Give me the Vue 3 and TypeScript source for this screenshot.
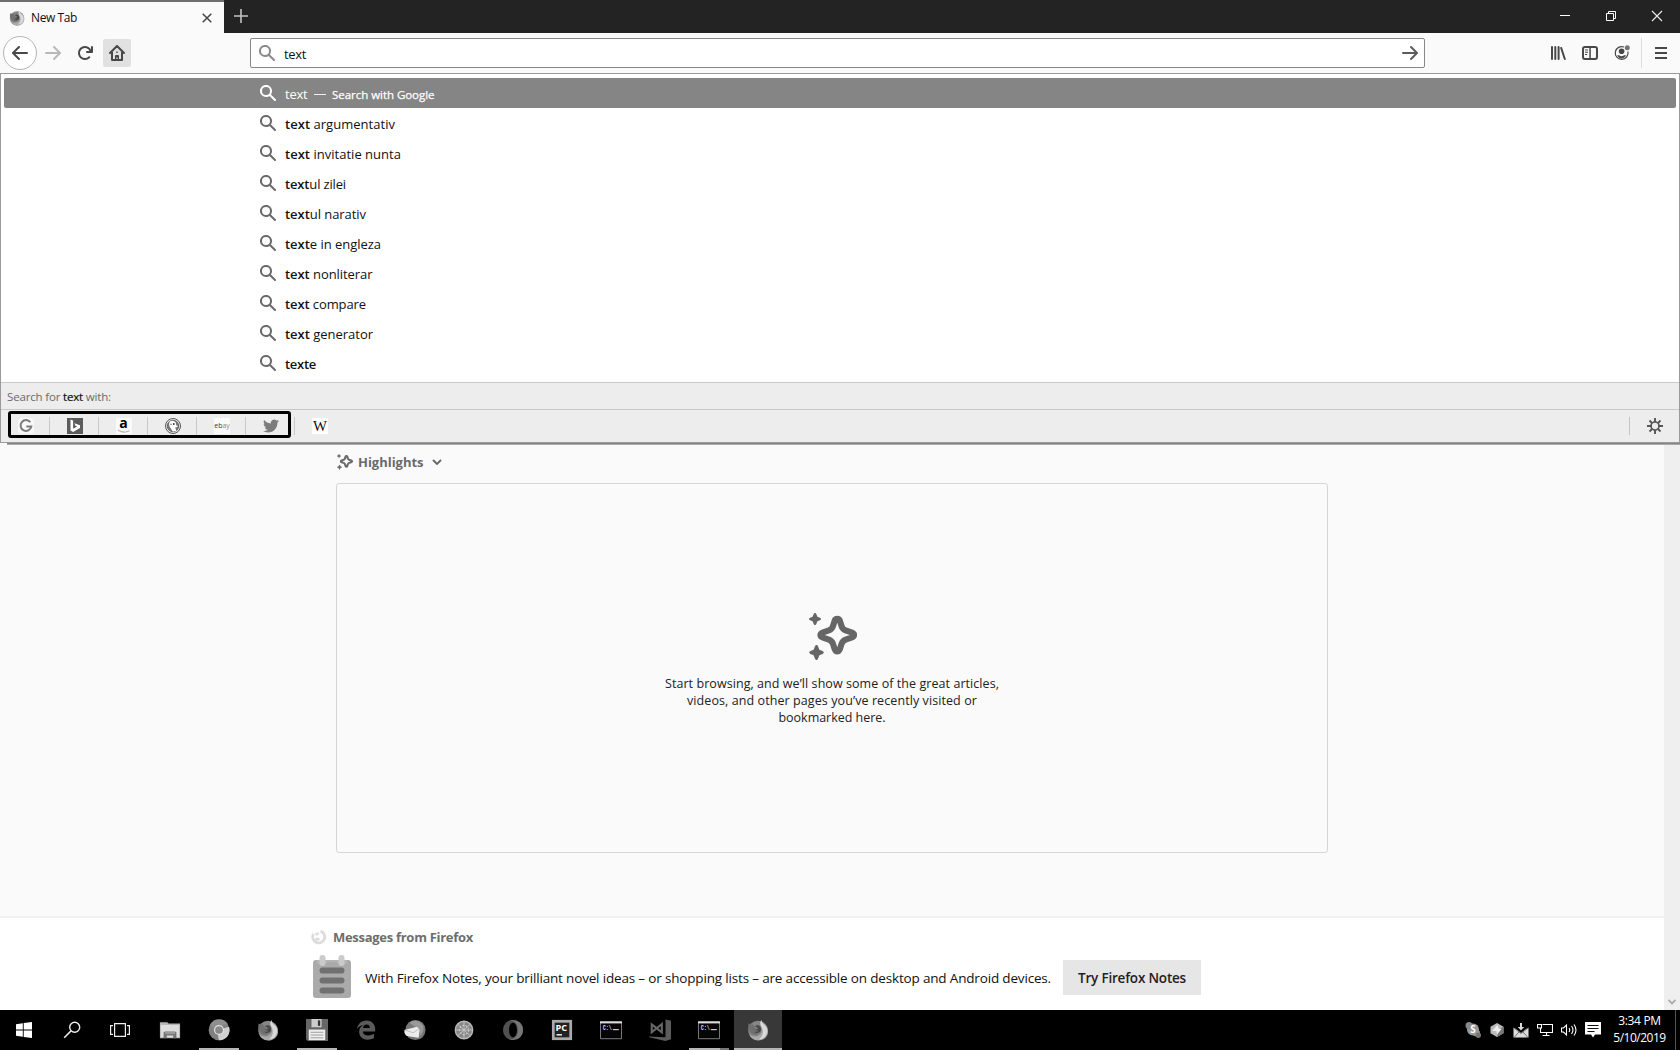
<script setup lang="ts">
import type { Directive } from 'vue'

// Tracks a line of text so that it fills the given width in pixels.
const vFit: Directive<HTMLElement, number> = {
  mounted(el, { value }) {
    const count = (el.textContent ?? '').length
    const natural = el.getBoundingClientRect().width
    el.style.letterSpacing = `${(value - natural) / count}px`
  },
}

interface Suggestion { bold: string; rest: string; width: number }
const suggestions: Suggestion[] = [
  { bold: 'text', rest: ' argumentativ', width: 110 },
  { bold: 'text', rest: ' invitatie nunta', width: 116 },
  { bold: 'text', rest: 'ul zilei', width: 61 },
  { bold: 'text', rest: 'ul narativ', width: 81 },
  { bold: 'text', rest: 'e in engleza', width: 96 },
  { bold: 'text', rest: ' nonliterar', width: 87.5 },
  { bold: 'text', rest: ' compare', width: 81 },
  { bold: 'text', rest: ' generator', width: 88 },
  { bold: 'texte', rest: '', width: 31 },
]

const engines = ['google', 'bing', 'amazon', 'duck', 'ebay', 'twitter', 'wiki']

interface Task { icon: string; state?: 'open' | 'grouped' | 'active' }
const system = ['windows', 'find', 'taskview']
const tasks: Task[] = [
  { icon: 'explorer' },
  { icon: 'chrome', state: 'open' },
  { icon: 'firefox' },
  { icon: 'floppy', state: 'open' },
  { icon: 'edge' },
  { icon: 'thunderbird' },
  { icon: 'sphere' },
  { icon: 'opera' },
  { icon: 'pycharm' },
  { icon: 'terminal' },
  { icon: 'vscode' },
  { icon: 'terminal', state: 'grouped' },
  { icon: 'firefox', state: 'active' },
]
const tray = ['skype', 'hex', 'mail', 'network', 'volume', 'notice']
const noteLines = ["Start browsing, and we’ll show some of the great articles,", "videos, and other pages you’ve recently visited or", "bookmarked here."]
const noteWidths = [334, 290, 107]
</script>

<template>
  <div class="screen">
    <svg class="defs" aria-hidden="true">
      <symbol id="back" viewBox="0 0 16 16"><path d="M15 7H3.414l4.293-4.293a1 1 0 0 0-1.414-1.414l-6 6a1 1 0 0 0 0 1.414l6 6a1 1 0 0 0 1.414-1.414L3.414 9H15a1 1 0 0 0 0-2z" /></symbol>
      <symbol id="forward" viewBox="0 0 16 16"><path transform="matrix(-1 0 0 1 16 0)" d="M15 7H3.414l4.293-4.293a1 1 0 0 0-1.414-1.414l-6 6a1 1 0 0 0 0 1.414l6 6a1 1 0 0 0 1.414-1.414L3.414 9H15a1 1 0 0 0 0-2z" /></symbol>
      <symbol id="reload" viewBox="0 0 16 16"><path d="M15 1a1 1 0 0 0-1 1v2.418A6.995 6.995 0 1 0 8 15a6.954 6.954 0 0 0 4.95-2.05 1 1 0 0 0-1.414-1.414A5.019 5.019 0 1 1 12.549 6H10a1 1 0 0 0 0 2h5a1 1 0 0 0 1-1V2a1 1 0 0 0-1-1z" /></symbol>
      <symbol id="home" viewBox="0 0 16 16"><path fill="none" stroke="currentColor" stroke-width="2" stroke-linecap="round" stroke-linejoin="round" d="M1 8l7-7 7 7M3 7v8h10V7" /><path d="M6 15v-4a1 1 0 0 1 1-1h2a1 1 0 0 1 1 1v4H8.600v-2.500H7.400V15zM7.300 6.500h1.400v1.400H7.300z" /></symbol>
      <symbol id="search" viewBox="0 0 16 16"><path d="M15.707 14.293l-4.822-4.822a6.019 6.019 0 1 0-1.414 1.414l4.822 4.822a1 1 0 0 0 1.414-1.414zM6 10a4 4 0 1 1 4-4 4 4 0 0 1-4 4z" /></symbol>
      <symbol id="library" viewBox="0 0 16 16"><path fill="none" stroke="currentColor" stroke-width="2" stroke-linecap="round" d="M2 2v12M5.300 2v12M8.600 2v12M11.200 3l3.600 11" /></symbol>
      <symbol id="sidebar" viewBox="0 0 16 16"><rect x="1" y="2" width="14" height="12" rx="2" fill="none" stroke="currentColor" stroke-width="2" /><path d="M7.300 2h1.500v12H7.300zM3 4.500h3v1H3zM3 6.700h3v1H3zM3 8.900h2.200v1H3z" /></symbol>
      <symbol id="account" viewBox="0 0 16 16"><path fill="none" stroke="currentColor" stroke-width="1.200" d="M10 2A6.400 6.400 0 1 0 13.900 6.500" /><circle cx="7.600" cy="6.200" r="2.800" /><path d="M3.200 10.200h1.900c1.500 1.300 3.500 1.300 5 0H12c-.6 2-2.400 3.200-4.400 3.200s-3.800-1.200-4.400-3.200z" /><circle cx="13.300" cy="2.700" r="2.500" opacity=".75" /></symbol>
      <symbol id="menu" viewBox="0 0 16 16"><path d="M2 2h12v1.900H2zM2 7h12v1.900H2zM2 12h12v1.900H2z" /></symbol>
      <symbol id="spark" viewBox="0 0 48 48"><path fill="none" stroke="currentColor" stroke-width="6" stroke-linejoin="round" d="M28 4.500c1.500 0 2.200.8 2.600 2l1.600 5.200c.7 2.300 1.800 3.400 4 4.200l5.700 1.900c1.800.6 2.600 1.500 2.600 2.600s-.8 2-2.600 2.600l-5.700 1.900c-2.200.8-3.300 1.900-4 4.200l-1.700 5.200c-.5 1.300-1.200 2.200-2.500 2.200s-2-.9-2.500-2.200l-1.700-5.200c-.7-2.300-1.800-3.400-4-4.200l-5.700-1.900c-1.800-.6-2.600-1.500-2.600-2.600s.8-2 2.600-2.600l5.700-1.900c2.200-.8 3.300-1.900 4-4.200l1.600-5.200c.4-1.200 1.100-2 2.600-2z" transform="translate(-.3 1.200) scale(1.020)" /><path d="M6 0c.8 0 1.200.6 1.500 1.500l.9 2.200 2.500 1c1.500.5 1.500 2.100 0 2.600l-2.500 1-.9 2.200C7.200 11.400 6.800 12 6 12s-1.200-.6-1.500-1.500l-.9-2.200-2.500-1c-1.500-.5-1.500-2.100 0-2.600l2.500-1 .9-2.200C4.800.6 5.200 0 6 0zM7.500 32c.8 0 1.300.6 1.600 1.500l1.300 3.300 3.200 1.200c1.600.6 1.600 2.400 0 3l-3.200 1.200-1.300 3.300c-.3.900-.8 1.500-1.600 1.500s-1.300-.6-1.600-1.500l-1.300-3.300L1.400 41c-1.600-.6-1.600-2.400 0-3l3.200-1.200 1.300-3.300c.3-.9.8-1.500 1.600-1.500z" /></symbol>
      <symbol id="gear" viewBox="0 0 16 16"><circle cx="8" cy="8" r="4" fill="none" stroke="currentColor" stroke-width="1.700" /><path fill="none" stroke="currentColor" stroke-width="1.900" d="M8 0v4M8 12v4M0 8h4M12 8h4M2.500 2.500l2.600 2.600M10.900 10.900l2.600 2.600M13.500 2.500l-2.600 2.600M5.100 10.900l-2.600 2.600" /></symbol>
      <symbol id="firefox" viewBox="0 0 24 24">
        <circle cx="12" cy="12.500" r="10.700" fill="#858585" />
        <path d="M2 5c1.500 1 3 1 4 .8L9 9l3 8c-5 1-8-1-9.500-4.500C1 9.500 1.200 7 2 5z" fill="#707070" />
        <path d="M14 3l6 3c4 4.500 4 11.500-.5 15C13 26 5 23 2.500 17c4 3 12 3 13.500-3 .6-4-1-7-2-11z" fill="#a9a9a9" />
        <path d="M15.500 1c1 2 1.500 4 4 6 4 4 3 9-.5 13-2 1.600-4 2-6 2 5-3 5.500-9 2.500-14-1.600-2.500-1-4.500 0-7z" fill="#d9d9d9" />
        <path d="M9 8c1-1.300 4-1.700 5.500.5 1.300 2 1.100 4.500-.5 6-2.300 1.500-5 1-6-.7 2 .3 3.500 0 4.300-1-1.500-.3-2.300-.3-3.300-1.300 1.200-.4 2.700-.4 3.300-1.600-1.200-.6-2.300-.6-3.300-1.900z" fill="#484848" />
      </symbol>
      <symbol id="google" viewBox="0 0 16 16"><rect width="16" height="16" rx="4" fill="#f8f8f8" /><path d="M12.300 4.200A5.400 5.400 0 1 0 13.300 8.600H8.300" fill="none" stroke="#7b7b7b" stroke-width="2" /></symbol>
      <symbol id="bing" viewBox="0 0 16 16"><rect width="16" height="16" fill="#5c5c5c" /><path d="M3.500 1.500l2.600.9v8.400l4-2.200-1.700-.8-1-2.500 5.600 2v2.700L6.100 14l-2.600-1.500z" fill="#fff" /></symbol>
      <symbol id="amazon" viewBox="0 0 16 16"><rect width="16" height="16" fill="#fafafa" /><text x="7.500" y="10" text-anchor="middle" font-family="Open Sans, sans-serif" font-weight="700" font-size="14" fill="#000">a</text><path d="M2 12c4 2.700 8 2.600 11.500.7" fill="none" stroke="#b5b5b5" stroke-width="1.200" /></symbol>
      <symbol id="duck" viewBox="0 0 16 16"><circle cx="8" cy="8" r="7.500" fill="#e8e8e8" stroke="#555" /><circle cx="8" cy="8" r="5.700" fill="#777" stroke="#555" stroke-width=".8" /><path d="M4.800 3.500c2.500-1.500 5.700-.5 6.200 2l.2 2c1 0 2 .3 1.500 1-.8.700-2 .6-2.400 1.200l1 3.300-3.500.5L4.800 9c-1-2-1-4 0-5.500z" fill="#fff" /><circle cx="8.800" cy="6" r=".9" fill="#333" /><circle cx="6" cy="6.300" r=".7" fill="#555" /></symbol>
      <symbol id="ebay" viewBox="0 0 16 16"><rect width="16" height="16" fill="#fafafa" /><text x=".3" y="10" textLength="15.400" lengthAdjust="spacingAndGlyphs" font-family="Open Sans, sans-serif" font-size="7.500" fill="#333">eb<tspan fill="#888">ay</tspan></text></symbol>
      <symbol id="twitter" viewBox="0 0 24 24"><path fill="#7c7c7c" d="M23.953 4.570a10 10 0 01-2.825.775 4.958 4.958 0 002.163-2.723c-.951.555-2.005.959-3.127 1.184a4.920 4.920 0 00-8.384 4.482C7.690 8.095 4.067 6.130 1.640 3.162a4.822 4.822 0 00-.666 2.475c0 1.710.870 3.213 2.188 4.096a4.904 4.904 0 01-2.228-.616v.060a4.923 4.923 0 003.946 4.827 4.996 4.996 0 01-2.212.085 4.936 4.936 0 004.604 3.417 9.867 9.867 0 01-6.102 2.105c-.390 0-.779-.023-1.170-.067a13.995 13.995 0 007.557 2.209c9.053 0 13.998-7.496 13.998-13.985 0-.210 0-.420-.015-.630A9.935 9.935 0 0024 4.590z" /></symbol>
      <symbol id="wiki" viewBox="0 0 16 16"><rect width="16" height="16" fill="#fff" /><text x="1" y="13" textLength="14" lengthAdjust="spacingAndGlyphs" font-family="Liberation Serif, serif" font-size="14" fill="#111">W</text></symbol>
      <symbol id="windows" viewBox="0 0 24 24"><path fill="#fff" d="M4 6.200l6.800-1v6.300H4zM11.700 5.100L20 4v7.500h-8.300zM4 12.500h6.800v6.300L4 17.800zM11.700 12.500H20V20l-8.300-1.100z" /></symbol>
      <symbol id="find" viewBox="0 0 24 24"><circle cx="14.700" cy="9.200" r="5" fill="none" stroke="#eee" stroke-width="1.400" /><path d="M11 12.900L4.200 19.700" stroke="#eee" stroke-width="1.500" /></symbol>
      <symbol id="taskview" viewBox="0 0 24 24"><path fill="none" stroke="#eee" stroke-width="1.200" d="M6.600 5.600h10.800v12.800H6.600zM5 7.600H2.600v8.800H5M19 7.600h2.400v8.800H19" /></symbol>
      <symbol id="explorer" viewBox="0 0 24 24"><path fill="#b5b5b5" d="M1 3.500h8l1.500 1.500H23v16H1z" /><path fill="#ddd" d="M2 6.500h20V20H2z" /><path fill="#777" d="M5 21v-6.500l1.500-1h11l1.500 1V21h-3.500v-3h-7v3z" /><path fill="#aaa" d="M6.500 14.500h11v1.500h-11z" /></symbol>
      <symbol id="chrome" viewBox="0 0 24 24"><circle cx="12" cy="12" r="11.300" fill="#808080" /><path d="M12 12L23 8.500A11.300 11.300 0 0 1 12 23.300l-1-4z" fill="#d0d0d0" /><path d="M12 6.700L22 6A11.300 11.300 0 0 0 2.300 6L7 12z" fill="#8e8e8e" /><circle cx="12" cy="12" r="5.500" fill="#e1e1e1" /><circle cx="12" cy="12" r="4.200" fill="#888" /></symbol>
      <symbol id="floppy" viewBox="0 0 24 24"><path fill="#666" d="M0 0h24v24H2l-2-2z" /><path fill="#ccc" d="M6 0h11v9H6z" /><path fill="#333" d="M13 1.500h2.500v6H13z" /><path fill="#eee" d="M3 11.500h18V23H3z" /><path stroke="#999" d="M5 14.500h14M5 17.500h14M5 20.500h14" /></symbol>
      <symbol id="edge" viewBox="0 0 24 24"><path fill="#5b5b5b" d="M2 10.500C3.500 4.500 7.500 1.500 12.500 1.500c6 0 9.700 4.500 9.500 9.500v2.500H8.500c.2 3 2.600 4.500 5.800 4.500 2.400 0 4.500-.7 6.400-1.800v4.500c-2 1.100-4.500 1.800-7.200 1.800-5.700 0-9-3.700-9-8.500 0-3.500 1.800-6 4.600-7.300C6.500 6.800 4 8 2 10.500zM8.700 9.700h7.600c0-2.500-1.500-3.700-3.700-3.700s-3.600 1.500-3.900 3.700z" /></symbol>
      <symbol id="thunderbird" viewBox="0 0 24 24"><circle cx="12.500" cy="12" r="11" fill="#777" /><path fill="#999" d="M6 4c6-4 12-2 15 4 1 4-1 9-4 11 1-6-1-10-6-11z" /><path fill="#ececec" d="M.5 12L14 8.500l3 3-1 9-13-2C1 17 0 15 .5 12z" /><path fill="none" stroke="#bbb" d="M1 12l9 3 6-4" /></symbol>
      <symbol id="sphere" viewBox="0 0 24 24"><circle cx="12" cy="12" r="9.500" fill="#888" stroke="#bbb" stroke-width="1.500" /><path fill="none" stroke="#c9c9c9" stroke-width=".9" d="M3 12h18M12 3v18M5.500 6l13 12M18.500 6l-13 12" /><circle cx="12" cy="12" r="5" fill="none" stroke="#ccc" stroke-width="1.200" stroke-dasharray="2 1.500" /></symbol>
      <symbol id="opera" viewBox="0 0 24 24"><path fill="#505050" fill-rule="evenodd" d="M12 1a11 11 0 1 0 0 22 11 11 0 0 0 0-22zm0 3c2.500 0 4.300 3.500 4.300 8s-1.800 8-4.300 8-4.300-3.500-4.300-8S9.500 4 12 4z" /><path fill="#777" d="M12 1a11 11 0 0 1 0 22c-1.800 0-3.500-.5-5-1.500 6 2 10.300-2.500 10.300-9.500S13 .5 7 2.500C8.500 1.500 10.200 1 12 1z" /></symbol>
      <symbol id="pycharm" viewBox="0 0 24 24"><path fill="#aaa" d="M1 1h22v22H1z" /><path fill="#222" d="M4 4h16v16H4z" /><text x="5" y="13" font-family="Open Sans, sans-serif" font-weight="700" font-size="10" fill="#fff">PC</text><path fill="#fff" d="M6 16.500h6V18H6z" /></symbol>
      <symbol id="terminal" viewBox="0 0 24 24"><path fill="#050505" stroke="#888" d="M.5 3.500h23v18H.5z" /><path fill="#ddd" d="M0 2.500h24v2.300H0z" /><text x="3" y="12" textLength="10" lengthAdjust="spacingAndGlyphs" font-family="Liberation Mono, monospace" font-weight="700" font-size="7" fill="#ddd">C:\</text><path fill="#ddd" d="M14 11h6.500v1.200H14z" /></symbol>
      <symbol id="vscode" viewBox="0 0 24 24"><path fill="#5c5c5c" d="M18 .5l6 1.500v20l-6 2L0 20v-1l18 1z" /><path fill="none" stroke="#666" stroke-width="2.300" d="M14 5.500L3 14.500V6L14 14.500z" /></symbol>
      <symbol id="skype" viewBox="0 0 16 16"><circle cx="8" cy="7.500" r="6" fill="#999" /><circle cx="4" cy="3.500" r="3.500" fill="#888" /><circle cx="11.500" cy="11" r="3.500" fill="#999" /><text x="8" y="11.200" text-anchor="middle" font-family="Open Sans, sans-serif" font-weight="700" font-size="10" fill="#fff">S</text><circle cx="13.300" cy="13.300" r="2.700" fill="#777" /></symbol>
      <symbol id="hex" viewBox="0 0 16 16"><path fill="#bbb" d="M8 1l6.500 3.700v6.600L8 15l-6.500-3.700V4.700z" /><path fill="#777" d="M9 8l5.500-3.300v6.600L8 15z" /><path fill="#eee" d="M3 9l5.500-6 1 3.500 3 .5L8 12.500 7.500 9z" /></symbol>
      <symbol id="mail" viewBox="0 0 16 16"><path fill="#ddd" d="M.5 5.500L4.500 8 8 11l3.500-3 4-2.500v10H.5z" /><path fill="none" stroke="#555" stroke-width=".8" d="M1 15.500l5-5.500M15 15.500L10 10M1 6l7 5.500L15 6" /><path fill="#ddd" d="M7 1h2v4h2.200L8 8.500 4.800 5H7z" /></symbol>
      <symbol id="network" viewBox="0 0 16 16"><path fill="none" stroke="#fff" stroke-width="1.100" d="M5.500 2.500h10v8H3.500V6.500M.5 2.500h4v3.500h-4zM9.500 10.500v3M5.500 13.500h7" /></symbol>
      <symbol id="volume" viewBox="0 0 16 16"><path fill="none" stroke="#fff" stroke-width="1.100" d="M.5 6h2l3-3v10l-3-3h-2zM8 6q1.500 2 0 4M10.500 4q3 4 0 8M13 2.500q4 5.500 0 11" /></symbol>
      <symbol id="notice" viewBox="0 0 16 16"><path fill="#fff" d="M0 0h16v12.500H10L8 15.500 6 12.500H0z" /><path stroke="#111" d="M2.500 3.500h11M2.500 6.500h11M2.500 9.500h7" /></symbol>
    </svg>

    <header class="tabs">
      <div class="tab">
        <svg class="i16"><use href="#firefox" /></svg>
        <span class="tab-name"><span v-fit="46">New Tab</span></span>
        <svg class="close" viewBox="0 0 10 10"><path d="M.7.7l8.600 8.600M9.300.7L.7 9.300" stroke="#444" stroke-width="1.500" /></svg>
      </div>
      <svg class="plus" viewBox="0 0 14 14"><path d="M7 0v14M0 7h14" stroke="#c4c4c4" stroke-width="1.600" /></svg>
      <div class="controls">
        <svg viewBox="0 0 12 12"><path d="M1 5.500h10" stroke="#fff" /></svg>
        <svg viewBox="0 0 12 12"><path d="M1.500 3.500h7v7h-7zM3.500 3.500v-2h7v7h-2" fill="none" stroke="#fff" /></svg>
        <svg viewBox="0 0 12 12"><path d="M1 1l10 10M11 1L1 11" stroke="#eee" stroke-width="1.100" /></svg>
      </div>
    </header>

    <nav class="toolbar">
      <button class="back"><svg class="i16"><use href="#back" /></svg></button>
      <button class="forward"><svg class="i16"><use href="#forward" /></svg></button>
      <button class="reload"><svg class="i16"><use href="#reload" /></svg></button>
      <button class="home"><svg class="i16"><use href="#home" /></svg></button>
      <div class="url">
        <svg class="i16 url-icon"><use href="#search" /></svg>
        <span class="url-text"><span v-fit="22">text</span></span>
        <svg class="i16 go"><use href="#forward" /></svg>
      </div>
      <div class="tools">
        <svg class="i16"><use href="#library" /></svg>
        <svg class="i16"><use href="#sidebar" /></svg>
        <svg class="i16"><use href="#account" /></svg>
      </div>
      <div class="menu"><svg class="i16"><use href="#menu" /></svg></div>
    </nav>

    <section class="panel">
      <div class="results">
        <div class="row selected">
          <svg class="i16"><use href="#search" /></svg>
          <span class="main"><span v-fit="22.500">text</span></span>
          <span class="dash"></span>
          <span class="action"><span v-fit="102.500">Search with Google</span></span>
        </div>
        <div v-for="s in suggestions" :key="s.bold + s.rest" class="row">
          <svg class="i16"><use href="#search" /></svg>
          <span class="main"><span v-fit="s.width"><b>{{ s.bold }}</b>{{ s.rest }}</span></span>
        </div>
      </div>
      <div class="with"><span v-fit="104">Search for <b>text</b> with:</span></div>
      <div class="engines">
        <div v-for="e in engines" :key="e" class="engine"><svg class="i16"><use :href="'#' + e" /></svg></div>
        <div class="settings"><svg class="i16"><use href="#gear" /></svg></div>
        <div class="frame"></div>
      </div>
    </section>
    <div class="shade"></div>

    <main class="content">
      <div class="page">
        <div class="highlights">
          <h3>
            <svg class="i16"><use href="#spark" /></svg>
            <span class="h-text"><span v-fit="65.500">Highlights</span></span>
            <svg class="chev" viewBox="0 0 10 6"><path d="M1 1l4 4 4-4" fill="none" stroke="#666" stroke-width="1.800" /></svg>
          </h3>
          <div class="empty">
            <svg class="big"><use href="#spark" /></svg>
            <p v-for="(line, i) in noteLines" :key="line"><span v-fit="noteWidths[i]">{{ line }}</span></p>
          </div>
        </div>
        <footer class="messages">
          <div class="from">
            <svg class="i16" viewBox="0 0 16 16"><path d="M9.500 2.200A6 6 0 1 1 2.500 5M4.500 5.500q2-1 3 0M4.500 9.500q2 1.500 4 0" fill="none" stroke="#dcdcdc" stroke-width="2.800" /></svg>
            <span v-fit="140">Messages from Firefox</span>
          </div>
          <div class="snippet">
            <svg class="notes" viewBox="0 0 38 43"><rect y="5" width="38" height="38" rx="3" fill="#aaa" /><path d="M4 5h30v3q-5 3-9 0l-2-1h-8l-2 1q-5 3-9 0z" fill="#b5b5b5" /><path d="M9.500 3v5M28.500 3v5" stroke="#cacaca" stroke-width="6" stroke-linecap="round" /><path d="M9.500 15.500h19M9.500 25.500h19M9.500 35.500h19" stroke="#707070" stroke-width="6" stroke-linecap="round" /></svg>
            <span class="snippet-text"><span v-fit="686">With Firefox Notes, your brilliant novel ideas – or shopping lists – are accessible on desktop and Android devices.</span></span>
            <button class="try"><span v-fit="108">Try Firefox Notes</span></button>
          </div>
        </footer>
      </div>
      <div class="scroll"><svg viewBox="0 0 8 6"><path d="M.5 1L4 4.500 7.500 1" fill="none" stroke="#aaa" stroke-width="1.800" /></svg></div>
    </main>

    <div class="taskbar">
      <div v-for="s in system" :key="s" class="sys"><svg class="i24"><use :href="'#' + s" /></svg></div>
      <div class="tasks">
        <div v-for="(t, i) in tasks" :key="i" class="task" :class="t.state"><svg class="i24"><use :href="'#' + t.icon" /></svg></div>
      </div>
      <div class="tray">
        <svg v-for="t in tray" :key="t" class="i16"><use :href="'#' + t" /></svg>
      </div>
      <div class="clock"><div><span v-fit="42.500">3:34 PM</span></div><div><span v-fit="52.500">5/10/2019</span></div></div>
      <div class="peek"></div>
    </div>
  </div>
</template>

<style>
body { margin: 0; overflow: hidden; }
</style>

<style scoped>
* { box-sizing: border-box; }
.screen { width: 1680px; height: 1050px; display: flex; flex-direction: column; background: #fafafa; color: #111; font-family: "Open Sans", "Noto Sans", sans-serif; font-size: 13px; white-space: nowrap; overflow: hidden; }
svg { display: block; flex: none; fill: currentColor; }
.defs { display: none; }
button { border: 0; padding: 0; background: none; color: inherit; font: inherit; display: flex; align-items: center; justify-content: center; }
.i16 { width: 16px; height: 16px; }
.i24 { width: 24px; height: 24px; }
b { font-weight: 600; }

.tabs { height: 33px; flex: none; background: #232323; display: flex; }
.tab { width: 224px; background: #fafafa; border-top: 2px solid #6d6d6d; display: flex; align-items: center; padding: 0 12px 0 9px; }
.tab-name { flex: 1; margin-left: 6px; font-size: 12px; }
.close { width: 10px; height: 10px; }
.plus { width: 14px; height: 14px; margin: 9px 0 0 10px; }
.controls { margin-left: auto; display: flex; gap: 34px; padding: 10px 17px 0 0; }
.controls svg { width: 12px; height: 12px; }

.toolbar { height: 40px; flex: none; background: #fafafa; display: flex; align-items: center; color: #484848; }
.back { width: 34px; height: 34px; margin-left: 3px; border: 1px solid #b5b5b5; border-radius: 50%; background: #fff; }
.forward { width: 32px; color: #b9b9b9; }
.reload { width: 32px; }
.home { width: 28px; height: 28px; margin-left: 2px; border-radius: 2px; background: #e1e1e1; }
.url { width: 1175px; height: 30px; margin-left: 119px; border: 1px solid #888; border-radius: 2px; background: #fff; display: flex; align-items: center; padding: 0 6px 0 8px; }
.url-icon { color: #8a8a8a; }
.go { color: #5c5c5c; }
.url-text { flex: 1; margin-left: 9px; color: #111; font-size: 13px; padding-top: 1px; }
.tools { margin-left: auto; display: flex; gap: 16px; }
.menu { height: 30px; margin-left: 11px; border-left: 1px solid #ddd; padding: 7px 11px 0 11px; }

.panel { height: 370px; flex: none; border: 1px solid #9a9a9a; background: #fff; display: flex; flex-direction: column; }
.results { height: 308px; padding: 4px 3px 0; }
.row { height: 30px; display: flex; align-items: center; padding-left: 256px; color: #111; font-size: 13px; }
.row > svg { color: #6a6a6a; }
.main { margin-left: 9px; padding-top: 2px; }
.selected, .row.selected > svg { color: #fff; }
.selected { background: #858585; border-radius: 2px; }
.dash { width: 12px; height: 1px; margin: 3px 6px 0 6.500px; background: #eee; }
.action { font-size: 11.500px; padding-top: 3px; font-weight: 500; -webkit-text-stroke: .25px #fff; }
.with { height: 27px; border-top: 1px solid #c9c9c9; background: #ededed; color: #6a6a6a; font-size: 11.500px; line-height: 27px; padding-left: 6px; }
.with b { color: #111; font-weight: 500; -webkit-text-stroke: .2px #111; }
.engines { flex: 1; position: relative; display: flex; align-items: center; border-top: 1px solid #c9c9c9; background: #ededed; padding-bottom: 1px; }
.engine { width: 49px; height: 18px; display: flex; align-items: center; justify-content: center; border-right: 1px solid #c9c9c9; padding-left: 1px; }
.engine:nth-child(7) { border: 0; }
.settings { height: 18px; margin-left: auto; border-left: 1px solid #c4c4c4; padding: 1px 16px 0 17px; color: #555; }
.frame { position: absolute; left: 7px; top: 1px; width: 283px; height: 27px; border: 3px solid #000; border-radius: 3px; }
.shade { height: 2px; flex: none; margin-left: 7px; background: linear-gradient(#868686 1px, #a8a8a8 1px); }

.content { flex: 1; display: flex; }
.page { flex: 1; display: flex; flex-direction: column; }
.highlights { height: 473px; border-bottom: 2px solid #f1f1f1; padding: 6px 0 0 337px; }
h3 { margin: 0; height: 21px; display: flex; align-items: center; color: #6a6a6a; font-size: 13px; font-weight: 700; }
.h-text { margin: 0 8px 0 5px; }
.chev { width: 10px; height: 6px; margin-top: 1px; }
.empty { width: 992px; height: 370px; margin: 11px 0 0 -1px; border: 1px solid #d5d5d5; border-radius: 3px; padding-top: 129px; text-align: center; font-size: 12.500px; line-height: 17px; color: #222; }
.big { width: 48px; height: 48px; margin: 0 auto 14px; color: #666; transform: translateX(1px); }
.empty p { margin: 0; }
.messages { flex: 1; background: #fff; }
.from { height: 35px; padding: 2px 0 0 311px; display: flex; align-items: center; gap: 6px; color: #6d6d6d; font-size: 13px; font-weight: 700; }
.snippet { display: flex; align-items: center; padding: 0 0 0 313px; margin-top: 2px; }
.notes { width: 38px; height: 43px; }
.snippet-text { margin-left: 14px; font-size: 13.500px; padding-top: 2px; }
.try { width: 138px; height: 35px; margin: 2px 0 0 12px; background: #e6e6e6; font-size: 13.500px; font-weight: 600; color: #222; }
.scroll { width: 16px; background: #efefef; display: flex; align-items: flex-end; justify-content: center; padding-bottom: 5px; }
.scroll svg { width: 8px; height: 6px; }

.taskbar { height: 40px; flex: none; background: #000; color: #fff; display: flex; align-items: center; }
.sys { width: 48px; display: flex; justify-content: center; }
.tasks { display: flex; align-self: stretch; margin-left: 2px; }
.task { width: 49px; display: flex; align-items: center; justify-content: center; position: relative; padding-right: 2px; }
.task .i24 { width: 22px; height: 22px; }
.open::after, .grouped::after { content: ""; position: absolute; left: 4px; bottom: 0; width: 40px; height: 2px; background: #b5b5b5; }
.grouped::after { background: linear-gradient(90deg, #b5b5b5 31px, #777 31px); }
.active { width: 48px; background: #383838; border-bottom: 2px solid #b5b5b5; padding: 2px 0 0; }
.tray { margin-left: auto; display: flex; gap: 8px; }
.clock { width: 74px; font-size: 12px; line-height: 17px; text-align: center; padding: 0 0 3px 3px; }
.peek { align-self: stretch; width: 5px; border-left: 1px solid #555; }
</style>
